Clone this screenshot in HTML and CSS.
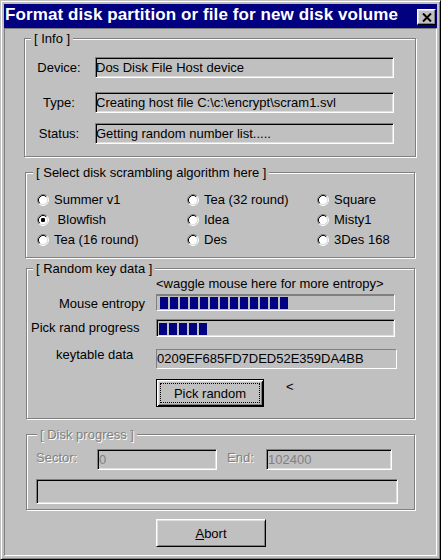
FILE: index.html
```html
<!DOCTYPE html>
<html lang="en">
<head>
<meta charset="utf-8">
<title>Format disk partition or file for new disk volume</title>
<link rel="stylesheet" href="styles.css">
</head>
<body>
<div class="window">
  <div class="titlebar">
    <span class="title">Format disk partition or file for new disk volume</span>
    <span class="close-btn">
      <svg width="10" height="9" viewBox="0 0 10 9"><path d="M1 0.5 L9 8.5 M9 0.5 L1 8.5" stroke="#000" stroke-width="2" fill="none"/></svg>
    </span>
  </div>
  <div class="client">
    <div class="group group--info">
      <span class="group-title">[ Info ]</span>
      <div class="info-row">
        <span class="info-label">Device:</span>
        <div class="field">Dos Disk File Host device</div>
      </div>
      <div class="info-row info-row--type">
        <span class="info-label">Type:</span>
        <div class="field">Creating host file C:\c:\encrypt\scram1.svl</div>
      </div>
      <div class="info-row info-row--status">
        <span class="info-label">Status:</span>
        <div class="field">Getting random number list.....</div>
      </div>
    </div>

    <div class="group group--algo">
      <span class="group-title group-title--algo">[ Select disk scrambling algorithm here ]</span>
      <div class="algo-grid">
        <label class="radio"><svg class="radio-ico" width="12" height="12" viewBox="0 0 12 12"><circle cx="6" cy="6" r="4.5" fill="#fff"/><path d="M2.11 9.89 A5.5 5.5 0 0 1 9.89 2.11" stroke="#808080" fill="none"/><path d="M9.89 2.11 A5.5 5.5 0 0 1 2.11 9.89" stroke="#fff" fill="none"/><path d="M2.82 9.18 A4.5 4.5 0 0 1 9.18 2.82" stroke="#000" fill="none"/><path d="M9.18 2.82 A4.5 4.5 0 0 1 2.82 9.18" stroke="#dfdfdf" fill="none"/></svg><span>Summer v1</span></label>
        <label class="radio"><svg class="radio-ico" width="12" height="12" viewBox="0 0 12 12"><circle cx="6" cy="6" r="4.5" fill="#fff"/><path d="M2.11 9.89 A5.5 5.5 0 0 1 9.89 2.11" stroke="#808080" fill="none"/><path d="M9.89 2.11 A5.5 5.5 0 0 1 2.11 9.89" stroke="#fff" fill="none"/><path d="M2.82 9.18 A4.5 4.5 0 0 1 9.18 2.82" stroke="#000" fill="none"/><path d="M9.18 2.82 A4.5 4.5 0 0 1 2.82 9.18" stroke="#dfdfdf" fill="none"/></svg><span>Tea (32 round)</span></label>
        <label class="radio"><svg class="radio-ico" width="12" height="12" viewBox="0 0 12 12"><circle cx="6" cy="6" r="4.5" fill="#fff"/><path d="M2.11 9.89 A5.5 5.5 0 0 1 9.89 2.11" stroke="#808080" fill="none"/><path d="M9.89 2.11 A5.5 5.5 0 0 1 2.11 9.89" stroke="#fff" fill="none"/><path d="M2.82 9.18 A4.5 4.5 0 0 1 9.18 2.82" stroke="#000" fill="none"/><path d="M9.18 2.82 A4.5 4.5 0 0 1 2.82 9.18" stroke="#dfdfdf" fill="none"/></svg><span>Square</span></label>

        <label class="radio"><svg class="radio-ico" width="12" height="12" viewBox="0 0 12 12"><circle cx="6" cy="6" r="4.5" fill="#fff"/><path d="M2.11 9.89 A5.5 5.5 0 0 1 9.89 2.11" stroke="#808080" fill="none"/><path d="M9.89 2.11 A5.5 5.5 0 0 1 2.11 9.89" stroke="#fff" fill="none"/><path d="M2.82 9.18 A4.5 4.5 0 0 1 9.18 2.82" stroke="#000" fill="none"/><path d="M9.18 2.82 A4.5 4.5 0 0 1 2.82 9.18" stroke="#dfdfdf" fill="none"/><rect x="4" y="4" width="4" height="4" rx="1.2" fill="#000"/></svg><span>&nbsp;Blowfish</span></label>
        <label class="radio"><svg class="radio-ico" width="12" height="12" viewBox="0 0 12 12"><circle cx="6" cy="6" r="4.5" fill="#fff"/><path d="M2.11 9.89 A5.5 5.5 0 0 1 9.89 2.11" stroke="#808080" fill="none"/><path d="M9.89 2.11 A5.5 5.5 0 0 1 2.11 9.89" stroke="#fff" fill="none"/><path d="M2.82 9.18 A4.5 4.5 0 0 1 9.18 2.82" stroke="#000" fill="none"/><path d="M9.18 2.82 A4.5 4.5 0 0 1 2.82 9.18" stroke="#dfdfdf" fill="none"/></svg><span>Idea</span></label>
        <label class="radio"><svg class="radio-ico" width="12" height="12" viewBox="0 0 12 12"><circle cx="6" cy="6" r="4.5" fill="#fff"/><path d="M2.11 9.89 A5.5 5.5 0 0 1 9.89 2.11" stroke="#808080" fill="none"/><path d="M9.89 2.11 A5.5 5.5 0 0 1 2.11 9.89" stroke="#fff" fill="none"/><path d="M2.82 9.18 A4.5 4.5 0 0 1 9.18 2.82" stroke="#000" fill="none"/><path d="M9.18 2.82 A4.5 4.5 0 0 1 2.82 9.18" stroke="#dfdfdf" fill="none"/></svg><span>Misty1</span></label>

        <label class="radio"><svg class="radio-ico" width="12" height="12" viewBox="0 0 12 12"><circle cx="6" cy="6" r="4.5" fill="#fff"/><path d="M2.11 9.89 A5.5 5.5 0 0 1 9.89 2.11" stroke="#808080" fill="none"/><path d="M9.89 2.11 A5.5 5.5 0 0 1 2.11 9.89" stroke="#fff" fill="none"/><path d="M2.82 9.18 A4.5 4.5 0 0 1 9.18 2.82" stroke="#000" fill="none"/><path d="M9.18 2.82 A4.5 4.5 0 0 1 2.82 9.18" stroke="#dfdfdf" fill="none"/></svg><span>Tea (16 round)</span></label>
        <label class="radio"><svg class="radio-ico" width="12" height="12" viewBox="0 0 12 12"><circle cx="6" cy="6" r="4.5" fill="#fff"/><path d="M2.11 9.89 A5.5 5.5 0 0 1 9.89 2.11" stroke="#808080" fill="none"/><path d="M9.89 2.11 A5.5 5.5 0 0 1 2.11 9.89" stroke="#fff" fill="none"/><path d="M2.82 9.18 A4.5 4.5 0 0 1 9.18 2.82" stroke="#000" fill="none"/><path d="M9.18 2.82 A4.5 4.5 0 0 1 2.82 9.18" stroke="#dfdfdf" fill="none"/></svg><span>Des</span></label>
        <label class="radio"><svg class="radio-ico" width="12" height="12" viewBox="0 0 12 12"><circle cx="6" cy="6" r="4.5" fill="#fff"/><path d="M2.11 9.89 A5.5 5.5 0 0 1 9.89 2.11" stroke="#808080" fill="none"/><path d="M9.89 2.11 A5.5 5.5 0 0 1 2.11 9.89" stroke="#fff" fill="none"/><path d="M2.82 9.18 A4.5 4.5 0 0 1 9.18 2.82" stroke="#000" fill="none"/><path d="M9.18 2.82 A4.5 4.5 0 0 1 2.82 9.18" stroke="#dfdfdf" fill="none"/></svg><span>3Des 168</span></label>
      </div>
    </div>

    <div class="group group--keys">
      <span class="group-title">[ Random key data ]</span>
      <div class="waggle">&lt;waggle mouse here for more entropy&gt;</div>
      <div class="k-row k-row--mouse">
        <span class="k-label k-label--mouse">Mouse entropy</span>
        <div class="bar bar--mouse">
          <i class="block"></i><i class="block"></i><i class="block"></i><i class="block"></i><i class="block"></i><i class="block"></i><i class="block"></i><i class="block"></i><i class="block"></i><i class="block"></i><i class="block"></i><i class="block"></i><i class="block"></i>
        </div>
      </div>
      <div class="k-row k-row--pick">
        <span class="k-label k-label--pick">Pick rand progress</span>
        <div class="bar bar--pick">
          <i class="block"></i><i class="block"></i><i class="block"></i><i class="block"></i><i class="block"></i>
        </div>
      </div>
      <div class="k-row k-row--table">
        <span class="k-label k-label--table">keytable data</span>
        <div class="keyfield">0209EF685FD7DED52E359DA4BB</div>
      </div>
      <div class="k-row k-row--btn">
        <div class="btn btn--default"><span class="focus">Pick random</span></div>
        <span class="caret">&lt;</span>
      </div>
    </div>

    <div class="group group--disk">
      <span class="group-title group-title--disk">[ Disk progress ]</span>
      <div class="d-row">
        <span class="d-label d-label--sector">Sector:</span>
        <div class="dfield dfield--sector">0</div>
        <span class="d-label d-label--end">End:</span>
        <div class="dfield dfield--end">102400</div>
      </div>
      <div class="bigbar"></div>
    </div>

    <div class="btn btn--abort"><span><span class="accel">A</span>bort</span></div>
  </div>
</div>
</body>
</html>
```

FILE: styles.css
```css
* { box-sizing: border-box; }

html, body {
  margin: 0;
  padding: 0;
}

body {
  font-family: "Liberation Sans", Arial, sans-serif;
  font-size: 13px;
  line-height: 15px;
  color: #000;
  background: #c0c0c0;
}

.window {
  width: 441px;
  height: 560px;
  background: #c0c0c0;
  border: 1px solid;
  border-color: #c0c0c0 #000 #000 #c0c0c0;
  box-shadow: inset 1px 1px 0 #fff, inset -1px -1px 0 #808080;
  padding: 3px;
  display: flex;
  flex-direction: column;
}

/* ---------- title bar ---------- */
.titlebar {
  flex: none;
  height: 24px;
  background: #000080;
  display: flex;
  align-items: flex-start;
  padding-left: 1px;
}

.title {
  color: #fff;
  font-weight: bold;
  font-size: 17px;
  letter-spacing: 0.1px;
  line-height: 22px;
  white-space: nowrap;
  overflow: hidden;
}

.close-btn {
  flex: none;
  margin: 5px 1px 0 auto;
  width: 19px;
  height: 16px;
  background: #c0c0c0;
  border: 1px solid;
  border-color: #fff #000 #000 #fff;
  box-shadow: inset -1px -1px 0 #808080, inset 1px 1px 0 #dfdfdf;
  display: flex;
  align-items: center;
  justify-content: center;
}

.close-btn svg { display: block; }

/* ---------- client area ---------- */
.client {
  flex: 1;
  border: 1px solid;
  border-color: #808080 #fff #fff #808080;
}

.group {
  position: relative;
  border: 1px solid #808080;
  box-shadow: inset 1px 1px 0 #fff, 1px 1px 0 #fff;
}

.group-title {
  position: absolute;
  top: -8px;
  left: 6px;
  padding: 0 3px;
  background: #c0c0c0;
  line-height: 15px;
  white-space: nowrap;
}

.group-title--algo { left: 7px; }
.group-title--disk {
  left: 10px;
  color: #808080;
  text-shadow: 1px 1px 0 #fff;
}

/* info */
.group--info {
  margin: 9px 20px 0 19px;
  padding: 18px 0 12px 5px;
}

.info-row {
  display: flex;
  align-items: center;
  height: 21px;
}

.info-row--type { margin-top: 14px; }
.info-row--status { margin-top: 10px; }

.info-label {
  flex: none;
  width: 58px;
  margin-right: 7px;
  text-align: center;
  white-space: nowrap;
}

.field {
  flex: none;
  width: 299px;
  height: 21px;
  border: 1px solid;
  border-color: #808080 #fff #fff #808080;
  box-shadow: inset 1px 1px 0 #000, inset -1px -1px 0 #dfdfdf;
  line-height: 19px;
  white-space: nowrap;
  overflow: hidden;
}

/* algorithm radios */
.group--algo {
  margin: 15px 21px 0 20px;
  padding: 16px 0 8px 11px;
}

.algo-grid {
  display: grid;
  grid-template-columns: 150px 130px auto;
  grid-auto-rows: 20px;
}

.radio {
  display: flex;
  align-items: center;
  gap: 5px;
  white-space: nowrap;
}

.radio-ico {
  flex: none;
  display: block;
  margin-top: 2px;
}

/* random key data */
.group--keys {
  margin: 10px 21px 0 21px;
  padding: 7px 0 11px 0;
}

.waggle {
  padding-left: 129px;
  white-space: nowrap;
}

.k-row {
  display: flex;
  align-items: flex-start;
}

.k-row--mouse { margin-top: 3px; }
.k-row--pick { margin-top: 8px; }
.k-row--table { margin-top: 12px; }
.k-row--btn { margin-top: 10px; padding-left: 129px; }

.k-label {
  flex: none;
  width: 129px;
  white-space: nowrap;
}

.k-label--mouse { padding-left: 32px; margin-top: 2px; }
.k-label--pick { padding-left: 4px; margin-top: 1px; }
.k-label--table { padding-left: 29px; margin-top: -2px; }

.bar {
  flex: none;
  width: 239px;
  display: flex;
  gap: 2px;
  border: 1px solid;
  border-color: #808080 #fff #fff #808080;
}

.bar--mouse {
  height: 17px;
  box-shadow: inset 0 1px 0 #808080;
  padding: 2px 0 0 3px;
}

.bar--pick {
  height: 18px;
  box-shadow: inset 1px 1px 0 #000, inset -1px -1px 0 #dfdfdf;
  padding: 3px 0 0 2px;
}

.block {
  flex: none;
  width: 8px;
  height: 12px;
  background: #000080;
}

.keyfield {
  flex: none;
  width: 241px;
  height: 20px;
  border: 1px solid;
  border-color: #808080 #fff #fff #808080;
  line-height: 18px;
  white-space: nowrap;
}

.btn {
  flex: none;
  background: #c0c0c0;
  display: flex;
  align-items: center;
  justify-content: center;
  white-space: nowrap;
}

.btn--default {
  width: 108px;
  height: 28px;
  border: 1px solid #000;
  box-shadow: inset 1px 1px 0 #fff, inset -1px -1px 0 #000, inset 2px 2px 0 #dfdfdf, inset -2px -2px 0 #808080;
  padding: 3px;
}

.focus {
  flex: 1;
  align-self: stretch;
  border: 1px dotted #000;
  display: flex;
  align-items: center;
  justify-content: center;
}

.caret {
  margin-left: 22px;
}

/* disk progress */
.group--disk {
  margin: 15px 21px 0 21px;
  padding: 14px 0 5px 9px;
}

.d-row {
  display: flex;
  align-items: flex-start;
}

.d-label {
  flex: none;
  margin-top: 1px;
  color: #808080;
  text-shadow: 1px 1px 0 #fff;
  white-space: nowrap;
}

.d-label--sector { width: 61px; }
.d-label--end { width: 39px; margin-left: 10px; }

.dfield {
  flex: none;
  height: 21px;
  border: 1px solid;
  border-color: #808080 #fff #fff #808080;
  box-shadow: inset 1px 1px 0 #000, inset -1px -1px 0 #dfdfdf;
  line-height: 19px;
  color: #808080;
  padding-left: 1px;
}

.dfield--sector { width: 120px; }
.dfield--end { width: 126px; }

.bigbar {
  width: 362px;
  height: 25px;
  margin-top: 9px;
  border: 1px solid;
  border-color: #808080 #fff #fff #808080;
  box-shadow: inset 1px 1px 0 #000, inset -1px -1px 0 #dfdfdf;
}

.btn--abort {
  width: 110px;
  height: 28px;
  margin: 9px 0 0 151px;
  border: 1px solid;
  border-color: #fff #000 #000 #fff;
  box-shadow: inset 1px 1px 0 #dfdfdf, inset -1px -1px 0 #808080;
}

.accel { text-decoration: underline; }
```
